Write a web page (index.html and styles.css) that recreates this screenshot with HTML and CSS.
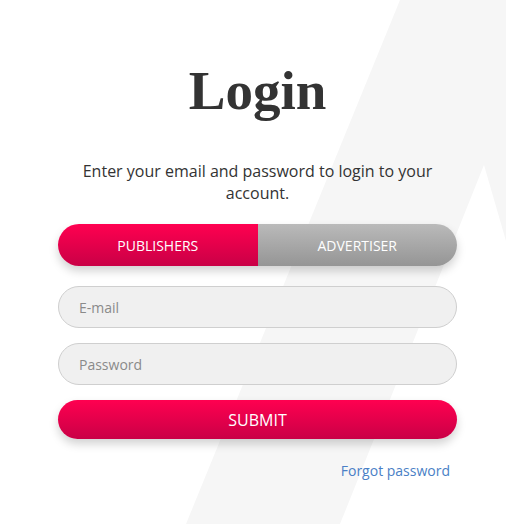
FILE: index.html
```html
<!DOCTYPE html>
<html lang="en">
<head>
<meta charset="utf-8">
<title>Login</title>
<link rel="stylesheet" href="styles.css">
</head>
<body>
<div class="bg"></div>
<main class="login">
  <h1 class="title">Login</h1>
  <p class="lead">Enter your email and password to login to your account.</p>
  <div class="toggle">
    <button class="tab tab-active" type="button">PUBLISHERS</button>
    <button class="tab tab-muted" type="button">ADVERTISER</button>
  </div>
  <form class="form">
    <input class="field" type="email" placeholder="E-mail">
    <input class="field" type="password" placeholder="Password">
    <button class="submit" type="button">SUBMIT</button>
  </form>
  <div class="forgot-row"><a class="forgot" href="#">Forgot password</a></div>
</main>
</body>
</html>
```
FILE: styles.css
```css
html, body {
  margin: 0;
  padding: 0;
  background: #ffffff;
}
body {
  width: 506px;
  height: 524px;
  overflow: hidden;
  position: relative;
  font-family: "Open Sans", "Noto Sans", sans-serif;
}
.bg {
  position: absolute;
  inset: 0;
  background: #f6f6f6;
  clip-path: polygon(400px 0, 506px 0, 506px 241px, 484px 165px, 340px 524px, 186px 524px);
  z-index: 0;
}
.login {
  position: relative;
  z-index: 1;
  width: 399px;
  margin-left: 58px;
  display: flex;
  flex-direction: column;
}
.title {
  margin: 56px 0 0;
  font-family: "Liberation Serif", "Times New Roman", serif;
  font-weight: 700;
  font-size: 55px;
  line-height: 70px;
  color: #333333;
  text-align: center;
}
.lead {
  margin: 34px 12px 0;
  font-size: 16px;
  line-height: 22px;
  color: #333333;
  text-align: center;
}
.toggle {
  margin-top: 20px;
  display: flex;
  height: 42px;
  border-radius: 21px;
  box-shadow: 0 5px 10px rgba(0, 0, 0, 0.18);
}
.tab {
  flex: 1;
  border: 0;
  margin: 0;
  padding: 0;
  font-family: inherit;
  font-size: 14px;
  color: #ffffff;
  cursor: pointer;
}
.tab-active {
  background: linear-gradient(#ff0050, #c90046);
  border-radius: 21px 0 0 21px;
}
.tab-muted {
  background: linear-gradient(#bababa, #959595);
  border-radius: 0 21px 21px 0;
}
.form {
  margin-top: 20px;
  display: flex;
  flex-direction: column;
}
.field {
  box-sizing: border-box;
  height: 42px;
  margin: 0 0 15px;
  padding: 0 20px;
  border: 1px solid #cfcfcf;
  border-radius: 21px;
  background: #f0f0f0;
  font-family: inherit;
  font-size: 14px;
  color: #555555;
  outline: none;
}
.field::placeholder {
  color: #8a8a8a;
}
.submit {
  margin-top: 0;
  height: 39px;
  border: 0;
  border-radius: 20px;
  background: linear-gradient(#ff0050, #c90046);
  color: #ffffff;
  font-family: inherit;
  font-size: 16px;
  box-shadow: 0 5px 10px rgba(0, 0, 0, 0.18);
  cursor: pointer;
}
.forgot-row {
  margin-top: 22px;
  display: flex;
  justify-content: flex-end;
  padding-right: 7px;
}
.forgot {
  font-size: 14px;
  line-height: 20px;
  color: #4a7fc6;
  text-decoration: none;
}
```
